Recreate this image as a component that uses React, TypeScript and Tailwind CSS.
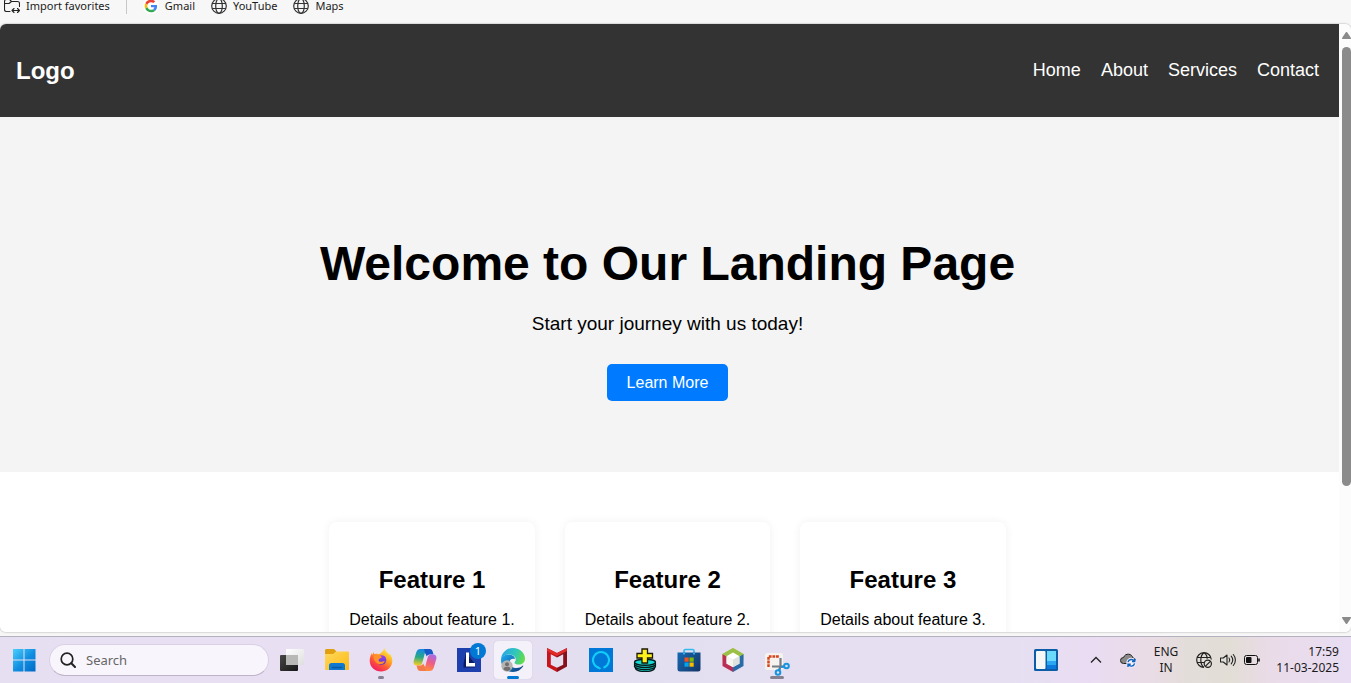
import React from "react";

type IconProps = { children: React.ReactNode; size?: string; box?: string };

function Icon({ children, size = "size-6", box = "0 0 24 24" }: IconProps) {
  return (
    <svg aria-hidden="true" viewBox={box} className={`${size} shrink-0`} fill="none">
      {children}
    </svg>
  );
}

const Globe = () => (
  <Icon size="size-4" box="0 0 16 16">
    <g stroke="#333" strokeWidth="1.200">
      <circle cx="8" cy="8" r="7.300" />
      <ellipse cx="8" cy="8" rx="3.300" ry="7.300" />
      <path d="M1.200 5.500h13.600M1.200 10.500h13.600" />
    </g>
  </Icon>
);

const ImportFolder = () => (
  <Icon size="size-4" box="0 0 16 16">
    <g stroke="#222" strokeWidth="1.100" strokeLinecap="round" strokeLinejoin="round">
      <path d="M6 13.500H2.500a2 2 0 0 1-2-2v-8a2 2 0 0 1 2-2h3l2 2h6a2 2 0 0 1 2 2V8.500" />
      <path d="M.5 5.500h4.500L7.500 3.500" />
      <path d="M8 12.500h7.500M10 10.500l-2 2 2 2M13.500 10.500l2 2-2 2" />
    </g>
  </Icon>
);

const GoogleG = () => (
  <Icon size="size-4" box="0 0 48 48">
    <circle cx="24" cy="24" r="24" fill="#fff" />
    <g transform="translate(5 5) scale(.79)">
      <path fill="#EA4335" d="M24 9.500c3.540 0 6.710 1.220 9.210 3.600l6.850-6.850C35.900 2.380 30.470 0 24 0 14.620 0 6.510 5.380 2.560 13.220l7.980 6.190C12.430 13.720 17.740 9.500 24 9.500z" />
      <path fill="#4285F4" d="M46.980 24.550c0-1.570-.15-3.090-.38-4.550H24v9.020h12.940c-.58 2.960-2.260 5.480-4.780 7.180l7.730 6c4.510-4.180 7.090-10.360 7.090-17.650z" />
      <path fill="#FBBC05" d="M10.530 28.590c-.48-1.450-.76-2.990-.76-4.590s.27-3.140.76-4.590l-7.980-6.190C.92 16.460 0 20.120 0 24s.92 7.540 2.560 10.780l7.970-6.190z" />
      <path fill="#34A853" d="M24 48c6.480 0 11.930-2.130 15.890-5.810l-7.730-6c-2.150 1.450-4.920 2.300-8.160 2.300-6.260 0-11.570-4.220-13.470-9.910l-7.980 6.190C6.510 42.620 14.620 48 24 48z" />
    </g>
  </Icon>
);

const WindowsLogo = () => (
  <Icon box="0 0 24 24">
    <defs>
      <linearGradient id="win" x1="0" y1="0" x2="24" y2="24" gradientUnits="userSpaceOnUse">
        <stop stopColor="#4fd4ff" />
        <stop offset=".55" stopColor="#0f8de0" />
        <stop offset="1" stopColor="#0067c5" />
      </linearGradient>
    </defs>
    <path fill="url(#win)" d="M1 1h10.500v10.500H1zM12.500 1H23.500v10.500h-11zM1 12.500h10.500v11H1zM12.500 12.500h11v11h-11z" />
  </Icon>
);

const TaskView = () => (
  <Icon>
    <defs>
      <linearGradient id="tvd" x1="0" y1="0" x2="1" y2="1">
        <stop stopColor="#474745" />
        <stop offset="1" stopColor="#171717" />
      </linearGradient>
      <linearGradient id="tvl" x1="0" y1="0" x2="1" y2="1">
        <stop stopColor="#fff" />
        <stop offset="1" stopColor="#dedede" />
      </linearGradient>
    </defs>
    <rect x="0" y="7" width="18" height="16" rx="1" fill="url(#tvd)" />
    <rect x="6" y="1" width="18" height="16" rx="1" fill="url(#tvl)" />
    <path d="M6 7h12v10H7a1 1 0 0 1-1-1z" fill="#b8b8b7" />
  </Icon>
);

const Explorer = () => (
  <Icon>
    <defs>
      <linearGradient id="fold" x1="0" y1="0" x2="1" y2="1">
        <stop stopColor="#ffd95e" />
        <stop offset="1" stopColor="#fdb913" />
      </linearGradient>
    </defs>
    <path fill="#e0a012" d="M0 2.500C0 1.700.7 1 1.500 1H9l2.500 2.500L9 7H0z" />
    <path fill="url(#fold)" d="M0 6h8l3-2.500h12a1 1 0 0 1 1 1V21a1 1 0 0 1-1 1H1a1 1 0 0 1-1-1z" />
    <path fill="#0f78d0" d="M4 22v-4.500a2.500 2.500 0 0 1 2.500-2.500h11a2.500 2.500 0 0 1 2.500 2.500V22z" />
    <path d="M7.500 19.500h9" stroke="#085a9e" strokeWidth="1.500" strokeLinecap="round" />
  </Icon>
);

const Firefox = () => (
  <Icon>
    <defs>
      <linearGradient id="ff" x1="19" y1="2" x2="6" y2="22" gradientUnits="userSpaceOnUse">
        <stop stopColor="#ffe83b" />
        <stop offset=".35" stopColor="#ffac24" />
        <stop offset=".65" stopColor="#ff5a36" />
        <stop offset="1" stopColor="#f21f63" />
      </linearGradient>
      <linearGradient id="ffp" x1="12" y1="6" x2="12" y2="17" gradientUnits="userSpaceOnUse">
        <stop stopColor="#a348ec" />
        <stop offset="1" stopColor="#5738cf" />
      </linearGradient>
    </defs>
    <path fill="url(#ff)" d="M15.500 0c.3 2.500 2 3.800 3.500 5.200.8.800 1.300 1.600 1.600 2.400V5.500C22.500 8 23.500 11 23.300 13.500 22.800 19.500 18 23.500 12 23.500S.8 19.300.7 12.800C.6 10 1.800 6.800 3 5v2.500L4.500 4l.8 2.300C7 5.600 8.500 5.700 9.500 6.200 11.800 5.500 14.200 3.500 15.500 0z" />
    <circle cx="12.500" cy="12" r="4.800" fill="url(#ffp)" />
    <path fill="#ff9228" d="M4.500 8.500C6.500 6.500 9 6 11 7.500l2 1.700c-.3 1-2.700 1.200-3.300 2-.5 1.600.6 2.600 2.200 2.600 1.500 0 2.400-.9 3.900-.6-.7 2-2.500 3-5 2.900-3.500-.1-6.300-3.500-6.300-7.600z" />
  </Icon>
);

const Copilot = () => (
  <Icon>
    <defs>
      <linearGradient id="cpa" x1="7" y1="1" x2="5" y2="17" gradientUnits="userSpaceOnUse">
        <stop stopColor="#1689e6" />
        <stop offset=".5" stopColor="#26a884" />
        <stop offset="1" stopColor="#f2cd24" />
      </linearGradient>
      <linearGradient id="cpb" x1="20" y1="7" x2="14" y2="22" gradientUnits="userSpaceOnUse">
        <stop stopColor="#a56be8" />
        <stop offset=".5" stopColor="#ef5b86" />
        <stop offset="1" stopColor="#ff8b3d" />
      </linearGradient>
    </defs>
    <path fill="url(#cpa)" d="M7.500 1H15c-2 .8-2.700 2.500-3.300 4.800L9.500 14c-.7 2.600-1.700 3.500-4 3.500H4c-2.700 0-4-1.800-3.300-4.500L3.200 4.500C4 2 5.300 1 7.500 1z" />
    <path fill="#1558c8" d="M11 1h5.500c2 0 2.700 1 3.200 2.700l.8 2.800h-3c-2.200 0-3 .4-3.700 2L12 5z" />
    <path fill="url(#cpb)" d="M16.500 23H9c2-.8 2.700-2.500 3.300-4.800L14.500 10c.7-2.600 1.700-3.500 4-3.500H20c2.700 0 4 1.800 3.300 4.500l-2.500 8.500c-.8 2.500-2.100 3.500-4.300 3.500z" />
    <path fill="#f37b4a" d="M13 23H7.500c-2 0-2.700-1-3.200-2.700l-.8-2.800h3c2.200 0 3-.4 3.700-2L12 19z" />
  </Icon>
);

const Lenovo = () => (
  <Icon>
    <path fill="#1e3fae" d="M0 0h24v24H0z" />
    <path fill="#0a1a60" d="M9 4.500L6.500 16v3.500H18V16z" />
    <path fill="#fff" d="M9 4.500h3V15h6v3.500H9z" />
  </Icon>
);

const Edge = () => (
  <Icon>
    <defs>
      <linearGradient id="eg1" x1="2" y1="4" x2="23" y2="12" gradientUnits="userSpaceOnUse">
        <stop stopColor="#27a9e6" />
        <stop offset=".55" stopColor="#31c8b7" />
        <stop offset="1" stopColor="#66dd45" />
      </linearGradient>
      <linearGradient id="eg2" x1="2" y1="10" x2="16" y2="23" gradientUnits="userSpaceOnUse">
        <stop stopColor="#1b9de2" />
        <stop offset="1" stopColor="#114a8b" />
      </linearGradient>
    </defs>
    <path fill="url(#eg2)" d="M0 12c0-3 3-5.500 7.500-5.500C12 6.500 14 9 14 11c-3.500-1-5.500 1-5.500 3.500 0 3.500 3.500 5.500 7 5.500 2.500 0 4.500-1 6-2.300.5-.4 1 .1.700.6C20 21.800 16.500 24 12 24 5.500 24 0 18.800 0 12z" />
    <path fill="url(#eg1)" d="M0 11.500C.5 5 5.500 0 12 0c7.500 0 12 5.500 12 10.500 0 4-3 6-6 6-2.700 0-4.500-.9-4.500-1.800 0-.8 1.200-1.300 1.200-3.200 0-2.700-2.700-5-6.700-5C4.500 6.500 1 8.500 0 11.500z" />
    <circle cx="6" cy="18" r="5.700" fill="#b5b4b2" />
    <circle cx="6" cy="16.200" r="2" fill="#706f6d" />
    <path fill="#706f6d" d="M2.500 21.500c0-2 1.200-2.800 3.500-2.800s3.500.8 3.500 2.800A5 5 0 0 1 6 23a5 5 0 0 1-3.500-1.500z" />
  </Icon>
);

const McAfee = () => (
  <Icon>
    <path fill="#c8151c" d="M2 0l10 5v4.500L5.800 6.300v10.500L12 19.800V24L2 18.500z" />
    <path fill="#86101b" d="M22 0L12 5v4.500l6.200-3.200v10.500L12 19.800V24l10-5.500z" />
    <path fill="#e22c2c" d="M2 0l10 5 10-5v3l-10 5-10-5z" />
  </Icon>
);

const Alexa = () => (
  <Icon>
    <path fill="#0078d7" d="M0 0h24v24H0z" />
    <path d="M9.500 19.700a8 8 0 1 1 5 0" stroke="#12cdf6" strokeWidth="2" />
    <path fill="#12cdf6" d="M9 18.200l3.200 2-1.500 1.300-2.500-1.300z" />
  </Icon>
);

const DiskPlus = () => (
  <Icon>
    <g fill="#16d9d3" stroke="#06191b" strokeWidth="1.400">
      <ellipse cx="12" cy="20.300" rx="9.500" ry="3.200" />
      <ellipse cx="12" cy="18.300" rx="10.500" ry="3.200" />
      <ellipse cx="12" cy="16.200" rx="10.500" ry="3.200" />
      <ellipse cx="12" cy="14.200" rx="10.500" ry="3" />
    </g>
    <path fill="#fff01e" stroke="#1b1a00" strokeWidth="1.300" d="M9 1h5.500v4.500h5v4.500h-5V15H9v-5H4V5.500h5z" />
  </Icon>
);

const Store = () => (
  <Icon>
    <defs>
      <linearGradient id="st" x1="0" y1="5" x2="24" y2="24" gradientUnits="userSpaceOnUse">
        <stop stopColor="#1569b4" />
        <stop offset="1" stopColor="#153463" />
      </linearGradient>
    </defs>
    <path d="M7 7V3c0-1 .5-1.500 1.500-1.500h7c1 0 1.500.5 1.500 1.500v4" stroke="#35b9f1" strokeWidth="1.700" />
    <path fill="url(#st)" d="M.5 4.500h23V21a2.500 2.500 0 0 1-2.500 2.500H3A2.500 2.500 0 0 1 .5 21z" />
    <path d="M7 4.500v2M17 4.500v2" stroke="#35b9f1" strokeWidth="1.700" />
    <path fill="#f25022" d="M7.500 9.500h4.200v4.200H7.500z" />
    <path fill="#7fba00" d="M12.500 9.500h4.200v4.200h-4.200z" />
    <path fill="#00a4ef" d="M7.500 14.500h4.200v4.200H7.500z" />
    <path fill="#ffb900" d="M12.500 14.500h4.200v4.200h-4.200z" />
  </Icon>
);

const NetBeans = () => (
  <Icon>
    <path fill="#b2cf55" d="M12 0l10.500 6v6L12 6.500 1.500 12V6z" />
    <path fill="#bb2d53" d="M1.500 6l4 2.300v7.400L12 19v5L1.500 18z" />
    <path fill="#286ba8" d="M22.500 6l-4 2.300v7.400L12 19v5l10.500-6z" />
    <path fill="#9cbf45" d="M12 0l10.500 6-4 2.300L12 4.800 5.500 8.300l-4-2.300z" />
    <path fill="#fff" d="M12 4.500l6.500 3.700L12 11.700 5.500 8.200z" />
    <path fill="#f5f6f0" d="M5.500 8.200l6.500 3.500v7.600l-6.500-3.700z" />
    <path fill="#dfe3de" d="M18.500 8.200L12 11.700v7.600l6.500-3.700z" />
  </Icon>
);

const Snip = () => (
  <Icon size="size-8" box="0 0 32 32">
    <rect x="4" y="9" width="18" height="17" rx="2" fill="#f6f2ef" />
    <path d="M7.500 23V12.500h11" stroke="#d6441d" strokeWidth="2.500" strokeDasharray="2.800 .8" />
    <path d="M11 22.500h12M19.500 14v9l-2 4" stroke="#777c84" strokeWidth="2.200" />
    <circle cx="25.500" cy="22" r="2.300" stroke="#1593df" strokeWidth="2" />
    <circle cx="17" cy="28.500" r="2.300" stroke="#1593df" strokeWidth="2" />
    <path d="M20 23l3-.5M19 24.500l-1 2" stroke="#1593df" strokeWidth="2" />
  </Icon>
);

const Widgets = () => (
  <Icon>
    <rect width="24" height="22" y="1" rx="1.500" fill="#0c5ca8" />
    <rect x="2" y="3" width="9.500" height="18" rx="1" fill="#f5f7f7" />
    <path fill="#6ad9fb" d="M13 3h9v10h-9z" />
    <path fill="#2aa7f0" d="M13 13h9v4h-9z" />
    <path fill="#0b78dc" d="M13 17h9v4h-9z" />
  </Icon>
);

const Cloud = () => (
  <Icon size="size-4" box="0 0 16 16">
    <path fill="#8a8988" stroke="#222" strokeWidth="1" d="M3.500 11.500a3 3 0 0 1 0-6C4.500 3 6.500 2 8.500 2.200c2.300.2 4 1.600 4.400 3.800 1.600.3 2.600 1.300 2.600 3 0 1.500-1 2.500-2.500 2.500z" />
    <circle cx="11.300" cy="10.800" r="5" fill="#f6effb" />
    <path stroke="#0b64c0" strokeWidth="1.400" d="M8 10.200a3.400 3.400 0 0 1 6.300-1M14.600 11.400a3.400 3.400 0 0 1-6.300 1M14.700 6.800v2.700H12M8 15v-2.700h2.700" />
  </Icon>
);

const GlobeOff = () => (
  <Icon size="size-4" box="0 0 16 16">
    <g stroke="#222" strokeWidth="1.200">
      <path d="M8 15.300A7.300 7.300 0 1 1 15.300 7.500M8 15.300C6 14 4.800 11.500 4.800 8S6 2 8 .7c2 1.300 3.200 3.500 3.200 6M1.200 5.500h13.600M1.200 10.500H8" />
      <circle cx="11.800" cy="11.800" r="3.600" />
      <path d="M9.300 14.300l5-5" />
    </g>
  </Icon>
);

const Speaker = () => (
  <Icon size="size-4" box="0 0 16 16">
    <g stroke="#222" strokeWidth="1.100" strokeLinejoin="round" strokeLinecap="round">
      <path d="M.5 6v4h2.800L7 13V3L3.300 6z" />
      <path d="M9 6c.9 1.200.9 2.800 0 4M11.200 4.200c1.800 2.200 1.800 5.400 0 7.600M13.300 2.500c2.800 3.200 2.800 7.800 0 11" />
    </g>
  </Icon>
);

const Battery = () => (
  <Icon size="size-4" box="0 0 16 16">
    <rect x=".5" y="3.500" width="13" height="9" rx="2" stroke="#111" />
    <rect x="2" y="5" width="5.500" height="6" rx="1" fill="#111" />
    <path d="M15 6.500v3" stroke="#111" strokeWidth="1.600" />
  </Icon>
);

const bookmarks = [
  { name: "Gmail", icon: <GoogleG /> },
  { name: "YouTube", icon: <Globe /> },
  { name: "Maps", icon: <Globe /> },
];

const apps = [
  { name: "File Explorer", icon: <Explorer /> },
  { name: "Firefox", icon: <Firefox />, marker: "w-1.5 bg-[#858090]" },
  { name: "Copilot", icon: <Copilot /> },
  { name: "Lenovo Vantage", icon: <Lenovo />, badge: "1" },
  { name: "Edge", icon: <Edge />, active: true, marker: "w-3 bg-[#0078d4]" },
  { name: "McAfee", icon: <McAfee /> },
  { name: "Alexa", icon: <Alexa /> },
  { name: "Disk tool", icon: <DiskPlus /> },
  { name: "Store", icon: <Store /> },
  { name: "NetBeans", icon: <NetBeans /> },
  { name: "Snipping Tool", icon: <Snip />, marker: "w-3.5 bg-[#858090]" },
];

function BookmarksBar() {
  return (
    <nav aria-label="Favorites" className="flex h-6 shrink-0 items-start gap-4 px-1 font-['Noto_Sans','Open_Sans',sans-serif] text-[11px] leading-4 text-[#1b1b1b]">
      <a href="#import" className="-mt-0.5 flex items-center gap-1.5">
        <ImportFolder />
        Import favorites
      </a>
      <span className="h-3.5 w-px bg-[#c8c8c8]" />
      {bookmarks.map((b) => (
        <a key={b.name} href={`#${b.name}`} className="-mt-0.5 flex items-center gap-1.5">
          {b.icon}
          {b.name}
        </a>
      ))}
    </nav>
  );
}

function LandingPage() {
  return (
    <div className="min-w-0 flex-1 bg-white text-black">
      <header className="flex items-center justify-between bg-[#333] py-7 pr-5 pl-4 text-white">
        <div className="text-2xl leading-[37px] font-bold">Logo</div>
        <nav aria-label="Main" className="flex gap-5 pb-0.5 text-lg leading-8">
          {["Home", "About", "Services", "Contact"].map((item) => (
            <a key={item} href={`#${item.toLowerCase()}`}>
              {item}
            </a>
          ))}
        </nav>
      </header>
      <section className="flex flex-col items-center bg-[#f4f4f4] pt-[119px] pr-1 pb-[71px] text-center">
        <h1 className="text-5xl leading-14 font-bold">Welcome to Our Landing Page</h1>
        <p className="mt-5 text-[19px] leading-6">Start your journey with us today!</p>
        <button type="button" className="mt-7 rounded-[5px] bg-[#007bff] px-5 text-base leading-[37px] text-white">
          Learn More
        </button>
      </section>
      <section id="services" className="flex justify-center gap-[30px] py-[50px] pr-1">
        {[1, 2, 3].map((n) => (
          <article key={n} className="rounded-lg px-5 pt-11 pb-9 text-center shadow-[0_0_10px_rgba(0,0,0,0.06)]">
            <h2 className="text-2xl leading-7 font-bold">Feature {n}</h2>
            <p className="mt-3.5 text-base leading-6">Details about feature {n}.</p>
          </article>
        ))}
      </section>
    </div>
  );
}

function ScrollTrack() {
  return (
    <div aria-hidden="true" className="flex w-3 shrink-0 flex-col items-end bg-[#fcfcfc] pt-2 pb-2">
      <svg viewBox="0 0 9 7" className="h-[7px] w-[9px]">
        <path d="M3.500.7a1.200 1.200 0 0 1 2 0L9 6a.8.800 0 0 1-.6 1H.6A.8.800 0 0 1 0 6z" fill="#8a8a8a" />
      </svg>
      <div className="mt-2 flex w-[9px] flex-1 flex-col">
        <div className="h-[77%] w-full rounded-full bg-[#8b8b8b]" />
      </div>
      <svg viewBox="0 0 9 7" className="h-[7px] w-[9px]">
        <path d="M3.500 6.300a1.200 1.200 0 0 0 2 0L9 1a.8.800 0 0 0-.6-1H.6A.8.800 0 0 0 0 1z" fill="#8a8a8a" />
      </svg>
    </div>
  );
}

function Taskbar() {
  return (
    <footer className="flex h-[47px] shrink-0 items-center border-t border-[#b4b0bd] bg-[linear-gradient(90deg,#e6dff2_0%,#e9dff3_22%,#e3dff0_45%,#e6dff2_75%,#eadcf2_81%,#eadce6_85%,#e2ddd9_88%,#e2ded6_91%,#eadbe8_94%,#e8ddf3_100%)] pr-3 font-['Noto_Sans','Open_Sans',sans-serif] text-[#1b1b1b]">
      <button type="button" aria-label="Start" className="mr-px flex w-12 justify-center">
        <WindowsLogo />
      </button>
      <label className="flex h-8 w-[220px] items-center gap-2.5 rounded-full border border-[#d9d0e6] border-b-[#bdb4c8] bg-[#f8f5fc] px-2.5">
        <Icon size="size-4" box="0 0 16 16">
          <circle cx="7" cy="7" r="5.800" stroke="#222" strokeWidth="1.700" />
          <path d="M11.300 11.300L15 15" stroke="#222" strokeWidth="2" strokeLinecap="round" />
        </Icon>
        <input type="search" aria-label="Search" placeholder="Search" className="w-full min-w-0 bg-transparent text-[13px] leading-5 outline-none placeholder:text-[#666]" />
      </label>
      <button type="button" aria-label="Task view" className="flex w-[46px] justify-center">
        <TaskView />
      </button>
      <div className="flex">
        {apps.map((app) => (
          <button key={app.name} type="button" aria-label={app.name} className="relative flex h-[46px] w-11 items-center justify-center">
            {app.active && <span className="absolute inset-x-[3px] inset-y-1 rounded bg-[#f5f1fb] shadow-[0_0_1px_#b9b2c6]" />}
            <span className="relative">{app.icon}</span>
            {app.badge && (
              <span className="absolute top-1.5 right-[5px] flex size-4 items-center justify-center rounded-full bg-[#0078d4] text-[11px] leading-4 text-white">{app.badge}</span>
            )}
            {app.marker && <span className={`absolute bottom-1 h-[3px] rounded-full ${app.marker}`} />}
          </button>
        ))}
      </div>
      <div className="ml-auto flex items-center text-xs leading-4">
        <button type="button" aria-label="Widgets" className="mr-8">
          <Widgets />
        </button>
        <button type="button" aria-label="Show hidden icons" className="mr-[18px]">
          <Icon size="size-3" box="0 0 12 12">
            <path d="M1 8.500l5-5 5 5" stroke="#222" strokeWidth="1.300" />
          </Icon>
        </button>
        <button type="button" aria-label="OneDrive" className="mr-[18px]">
          <Cloud />
        </button>
        <button type="button" className="mr-[18px] text-center">
          ENG
          <br />
          IN
        </button>
        <button type="button" aria-label="Network, volume and battery" className="mr-4 flex gap-2">
          <GlobeOff />
          <Speaker />
          <Battery />
        </button>
        <button type="button" className="text-right">
          17:59
          <br />
          11-03-2025
        </button>
      </div>
    </footer>
  );
}

export default function App() {
  return (
    <div className="flex h-screen flex-col overflow-hidden bg-[#f7f7f7] font-['Liberation_Sans',Arial,sans-serif]">
      <BookmarksBar />
      <main className="mb-1 flex min-h-0 flex-1 overflow-hidden rounded-md bg-white shadow-[0_0_2px_rgba(0,0,0,0.4)]">
        <LandingPage />
        <ScrollTrack />
      </main>
      <Taskbar />
    </div>
  );
}
